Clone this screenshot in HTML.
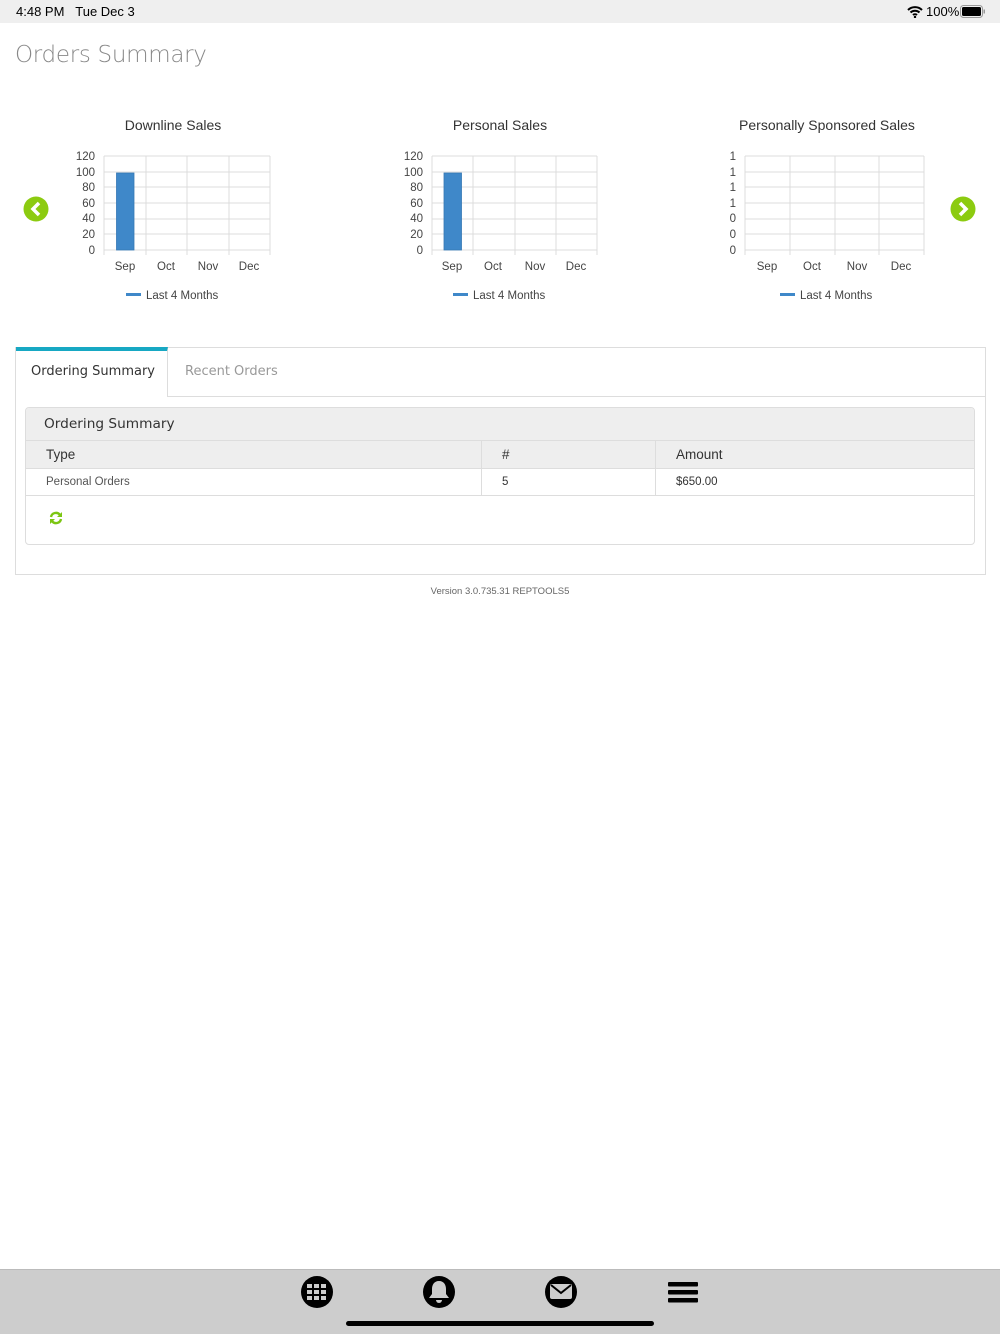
<!DOCTYPE html>
<html><head><meta charset="utf-8"><style>
*{margin:0;padding:0;box-sizing:border-box}
body{width:1000px;height:1334px;background:#fff;position:relative;font-family:"Liberation Sans",sans-serif;overflow:hidden;color:#333}
.a{position:absolute}
.dv{font-family:'DejaVu Sans',sans-serif}
</style></head><body>
<div class="a" style="left:0;top:0;width:1000px;height:23px;background:#efefef"></div>
<div class="a" style="left:16px;top:4px;font-size:13px;color:#000">4:48 PM&nbsp;&nbsp;&nbsp;Tue Dec 3</div>
<div class="a" style="left:926px;top:4px;font-size:13px;color:#000">100%</div>
<svg class="a" style="left:907px;top:5px" width="16" height="13" viewBox="0 0 16 13"><path d="M1 5a10 10 0 0 1 14 0M3.5 7.5a6.5 6.5 0 0 1 9 0M6 10a3 3 0 0 1 4 0" stroke="#000" stroke-width="2" fill="none"/><circle cx="8" cy="12" r="1.2"/></svg>
<svg class="a" style="left:960px;top:5px" width="26" height="13"><rect x="0.5" y="0.5" width="22" height="12" rx="3" fill="none" stroke="#999"/><rect x="2" y="2" width="19" height="9" rx="1.5"/><rect x="23.5" y="4.5" width="1.5" height="4" fill="#999"/></svg>
<div class="a dv" style="left:15px;top:42px;font-size:23px;color:#888;font-weight:300;letter-spacing:-0.3px">Orders Summary</div>

<svg class="a" style="left:0;top:100px" width="1000" height="220" font-family="Liberation Sans" font-size="11.5" fill="#444">
<g stroke="#dcdcdc" stroke-width="1">
<path d="M104 56H270M104 72H270M104 87H270M104 103H270M104 119H270M104 134H270M104 150H270M104 56V155M146 56V155M187 56V155M229 56V155M270 56V155"/>
<path d="M432 56H597M432 72H597M432 87H597M432 103H597M432 119H597M432 134H597M432 150H597M432 56V155M473 56V155M515 56V155M556 56V155M597 56V155"/>
<path d="M745 56H924M745 72H924M745 87H924M745 103H924M745 119H924M745 134H924M745 150H924M745 56V155M790 56V155M835 56V155M879 56V155M924 56V155"/>
</g>
<rect x="116.5" y="73" width="17.5" height="77" fill="#3f88c9" stroke="#3678b5" stroke-width="0.8"/>
<rect x="444" y="73" width="17.5" height="77" fill="#3f88c9" stroke="#3678b5" stroke-width="0.8"/>
<g font-size="14" fill="#333" text-anchor="middle"><text x="173" y="30">Downline Sales</text><text x="500" y="30">Personal Sales</text><text x="827" y="30">Personally Sponsored Sales</text></g>
<g text-anchor="end">
<text x="95" y="60">120</text><text x="95" y="76">100</text><text x="95" y="91">80</text><text x="95" y="107">60</text><text x="95" y="122">40</text><text x="95" y="138">20</text><text x="95" y="154">0</text>
<text x="423" y="60">120</text><text x="423" y="76">100</text><text x="423" y="91">80</text><text x="423" y="107">60</text><text x="423" y="122">40</text><text x="423" y="138">20</text><text x="423" y="154">0</text>
<text x="736" y="60">1</text><text x="736" y="76">1</text><text x="736" y="91">1</text><text x="736" y="107">1</text><text x="736" y="122">0</text><text x="736" y="138">0</text><text x="736" y="154">0</text>
</g>
<g text-anchor="middle">
<text x="125" y="170">Sep</text><text x="166" y="170">Oct</text><text x="208" y="170">Nov</text><text x="249" y="170">Dec</text>
<text x="452" y="170">Sep</text><text x="493" y="170">Oct</text><text x="535" y="170">Nov</text><text x="576" y="170">Dec</text>
<text x="767" y="170">Sep</text><text x="812" y="170">Oct</text><text x="857" y="170">Nov</text><text x="901" y="170">Dec</text>
</g>
<g fill="#3f88c9"><rect x="126" y="193" width="15" height="3"/><rect x="453" y="193" width="15" height="3"/><rect x="780" y="193" width="15" height="3"/></g>
<text x="146" y="199">Last 4 Months</text><text x="473" y="199">Last 4 Months</text><text x="800" y="199">Last 4 Months</text>
<circle cx="36" cy="109" r="12.5" fill="#8ccb10"/><path d="M39 103l-6 6 6 6" stroke="#fff" stroke-width="3.5" fill="none"/>
<circle cx="963" cy="109" r="12.5" fill="#8ccb10"/><path d="M960 103l6 6-6 6" stroke="#fff" stroke-width="3.5" fill="none"/>
</svg>

<div class="a" style="left:15px;top:347px;width:971px;height:228px;border:1px solid #ddd"></div>
<div class="a" style="left:16px;top:396px;width:969px;height:1px;background:#ddd"></div>
<div class="a" style="left:16px;top:347px;width:152px;height:50px;background:#fff;border-right:1px solid #ddd;border-top:4px solid #17a8c3"></div>
<div class="a dv" style="left:31px;top:364px;font-size:13px;color:#333">Ordering Summary</div>
<div class="a dv" style="left:185px;top:364px;font-size:13px;color:#999">Recent Orders</div>

<div class="a" style="left:25px;top:407px;width:950px;height:138px;border:1px solid #ddd;border-radius:4px;overflow:hidden">
 <div class="dv" style="height:33px;background:#eee;border-bottom:1px solid #ddd;font-size:13.7px;padding:8px 0 0 18px;color:#333">Ordering Summary</div>
 <div style="height:28px;background:#eee;border-bottom:1px solid #ddd;position:relative;font-size:13.5px">
  <span class="a" style="left:20px;top:6px">Type</span>
  <span class="a" style="left:455px;top:0;width:1px;height:28px;background:#ddd"></span>
  <span class="a" style="left:476px;top:6px">#</span>
  <span class="a" style="left:629px;top:0;width:1px;height:28px;background:#ddd"></span>
  <span class="a" style="left:650px;top:6px">Amount</span>
 </div>
 <div style="height:27px;border-bottom:1px solid #ddd;position:relative;font-size:11.5px;color:#555">
  <span class="a" style="left:20px;top:7px">Personal Orders</span>
  <span class="a" style="left:455px;top:0;width:1px;height:27px;background:#ddd"></span>
  <span class="a" style="left:476px;top:7px;color:#333">5</span>
  <span class="a" style="left:629px;top:0;width:1px;height:27px;background:#ddd"></span>
  <span class="a" style="left:650px;top:7px;color:#333">$650.00</span>
 </div>
 <svg class="a" style="left:23px;top:103px" width="14" height="14" viewBox="0 0 14 14"><path d="M2 6a5 5 0 0 1 9-2M12 8a5 5 0 0 1-9 2" stroke="#7cc613" stroke-width="2.4" fill="none"/><path d="M13 1v5H8zM1 13V8h5z" fill="#7cc613"/></svg>
</div>
<div class="a" style="left:0;top:586px;width:1000px;text-align:center;font-size:9.5px;color:#666">Version 3.0.735.31 REPTOOLS5</div>

<div class="a" style="left:0;top:1269px;width:1000px;height:65px;background:#cdcdcd;border-top:1px solid #bbb"></div>
<svg class="a" style="left:0;top:1269px" width="1000" height="65">
<circle cx="317" cy="23" r="16"/>
<g fill="#cdcdcd"><rect x="307" y="15" width="5" height="4"/><rect x="314" y="15" width="5" height="4"/><rect x="321" y="15" width="5" height="4"/><rect x="307" y="21" width="5" height="4"/><rect x="314" y="21" width="5" height="4"/><rect x="321" y="21" width="5" height="4"/><rect x="307" y="27" width="5" height="4"/><rect x="314" y="27" width="5" height="4"/><rect x="321" y="27" width="5" height="4"/></g>
<circle cx="439" cy="23" r="16"/>
<path d="M439 12c-5 0-7 4-7 8v5l-3 4h20l-3-4v-5c0-4-2-8-7-8z" fill="#cdcdcd"/><path d="M436 31a3 3 0 0 0 6 0z" fill="#cdcdcd"/>
<circle cx="561" cy="23" r="16"/>
<rect x="550" y="15" width="22" height="15" rx="2" fill="#cdcdcd"/><path d="M551 16l10 8 10-8" stroke="#000" stroke-width="2" fill="none"/>
<rect x="668" y="13" width="30" height="4.5" rx="1"/><rect x="668" y="21" width="30" height="4.5" rx="1"/><rect x="668" y="29" width="30" height="4.5" rx="1"/>
<rect x="346" y="52" width="308" height="5" rx="2.5"/>
</svg>
</body></html>
